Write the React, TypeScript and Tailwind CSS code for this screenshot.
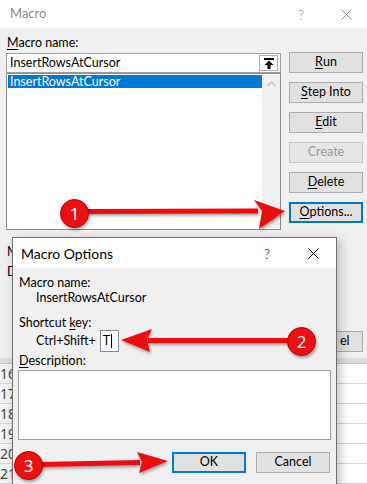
import React from "react";

const Btn = ({ children, focused, disabled }: { children: React.ReactNode; focused?: boolean; disabled?: boolean }) => (
    <div
        className={`h-[21px] w-[74px] flex items-center justify-center text-[12.5px] bg-[#e1e1e1] ${
            focused ? "border-2 border-[#0078d7]" : disabled ? "border border-[#c6c6c6]" : "border border-[#adadad]"
        } ${disabled ? "text-[#9a9a9a] bg-[#e6e6e6]" : "text-black"}`}
    >
        {children}
    </div>
);

const U = ({ children }: { children: React.ReactNode }) => <span className="underline underline-offset-2">{children}</span>;

const Close = ({ color }: { color: string }) => (
    <svg width="11" height="11" viewBox="0 0 11 11">
        <path d="M0.5 0.5 L10.5 10.5 M10.5 0.5 L0.5 10.5" stroke={color} strokeWidth="1" />
    </svg>
);

const rows = [16, 17, 18, 19, 20, 21];

export default function App() {
    return (
        <div className="relative w-[367px] h-[484px] overflow-hidden bg-white font-['Lato','Noto_Sans',sans-serif] text-black">
            {/* Macro dialog */}
            <div className="h-[28px] bg-white flex items-center pl-[10px]">
                <span className="text-[13px] text-[#8a8a8a]">Macro</span>
                <span className="ml-auto text-[14px] text-[#8a8a8a] font-light">?</span>
                <span className="ml-[37px] mr-[15px] flex items-center">
                    <Close color="#8a8a8a" />
                </span>
            </div>
            <div className="h-[330px] bg-[#f0f0f0] flex pl-[6px] pt-[6px]">
                <div className="w-[275px] flex flex-col">
                    <div className="h-[19px] leading-[18px] text-[12.5px] pl-[1px]">
                        <U>M</U>acro name:
                    </div>
                    <div className="h-[20px] bg-white border border-[#a0a0a0] flex items-center pl-[3px] pr-[2px] text-[12.5px]">
                        <span>InsertRowsAtCursor</span>
                        <div className="ml-auto w-[19px] h-[16px] border border-[#adadad] bg-white flex items-center justify-center">
                            <svg width="10" height="11" viewBox="0 0 10 11">
                                <rect x="0" y="0" width="10" height="2" fill="#000" />
                                <path d="M5 2.6 L9.5 7 L6.6 7 L6.6 11 L3.4 11 L3.4 7 L0.5 7 Z" fill="#000" />
                            </svg>
                        </div>
                    </div>
                    <div className="h-[157px] bg-white border border-[#8a8a8a] flex p-[1px] pr-0">
                        <div className="flex-1">
                            <div className="h-[13px] bg-[#0078d7] text-white text-[12.5px] leading-[13px] pl-[2px]">InsertRowsAtCursor</div>
                        </div>
                        <div className="w-[18px] bg-[#f0f0f0] flex flex-col items-center justify-between py-[6px]">
                            <svg width="9" height="6" viewBox="0 0 9 6">
                                <path d="M0.5 5 L4.5 1 L8.5 5" stroke="#c0c0c0" strokeWidth="1.3" fill="none" />
                            </svg>
                            <svg width="9" height="6" viewBox="0 0 9 6">
                                <path d="M0.5 1 L4.5 5 L8.5 1" stroke="#c0c0c0" strokeWidth="1.3" fill="none" />
                            </svg>
                        </div>
                    </div>
                    <div className="mt-[13px] h-[18px] leading-[18px] text-[12.5px] pl-[1px]">M</div>
                    <div className="mt-[2px] h-[18px] leading-[18px] text-[12.5px] pl-[1px]">D</div>
                </div>
                <div className="ml-[8px] pt-[18px] flex flex-col gap-[9px]">
                    <Btn>
                        <U>R</U>un
                    </Btn>
                    <Btn>
                        <U>S</U>tep Into
                    </Btn>
                    <Btn>
                        <U>E</U>dit
                    </Btn>
                    <Btn disabled>Create</Btn>
                    <Btn>
                        <U>D</U>elete
                    </Btn>
                    <Btn focused>
                        <U>O</U>ptions...
                    </Btn>
                    <div className="mt-[99px] flex justify-end">
                        <div className="w-[26px] h-[21px] border border-[#adadad] border-l-0 bg-[#e1e1e1] text-[12.5px] flex items-center pl-[3px]">el</div>
                    </div>
                </div>
            </div>

            {/* worksheet behind */}
            <div className="h-[6px] bg-[#dedede] border-b border-[#c4c4c4]" />
            {rows.map((r) => (
                <div key={r} className="h-[20px] flex border-b border-[#d6d6d6]">
                    <div className="w-[26px] bg-[#f3f3f3] border-r border-[#c8c8c8] text-[14px] leading-[20px] text-[#444] font-['Noto_Sans',sans-serif]">
                        {r}
                    </div>
                    <div className="flex-1 bg-white" />
                </div>
            ))}

            {/* Macro Options dialog */}
            <div className="absolute left-[12px] top-[237px] w-[325px] h-[260px] border border-[#6f6f6f] bg-[#f0f0f0] shadow-[3px_3px_10px_rgba(0,0,0,0.25)]">
                <div className="h-[30px] bg-white flex items-center pl-[8px]">
                    <span className="text-[14px]">Macro Options</span>
                    <span className="ml-auto text-[14px] font-light">?</span>
                    <span className="ml-[38px] mr-[17px] flex items-center">
                        <Close color="#000" />
                    </span>
                </div>
                <div className="flex flex-col pt-[7px] text-[12.5px]">
                    <div className="pl-[6px] leading-[15px]">Macro name:</div>
                    <div className="pl-[23px] leading-[15px]">InsertRowsAtCursor</div>
                    <div className="pl-[6px] leading-[15px] mt-[10px]">
                        Shortcut <U>k</U>ey:
                    </div>
                    <div className="pl-[23px] h-[22px] flex items-center">
                        <span>Ctrl+Shift+</span>
                        <div className="ml-[4px] w-[19px] h-[22px] bg-white border border-[#8a8a8a] flex items-center pl-[2px]">
                            <span>T</span>
                            <span className="w-px h-[14px] bg-black ml-[1px]" />
                        </div>
                    </div>
                    <div className="pl-[6px] leading-[15px] mt-[1px]">
                        <U>D</U>escription:
                    </div>
                    <div className="ml-[5px] mt-[2px] w-[313px] h-[70px] bg-white border border-[#a0a0a0]" />
                    <div className="mt-[12px] flex justify-end gap-[10px] pr-[6px]">
                        <Btn focused>OK</Btn>
                        <Btn>Cancel</Btn>
                    </div>
                </div>
            </div>

            {/* annotations */}
            <svg className="absolute left-0 top-0 pointer-events-none" width="367" height="484" viewBox="0 0 367 484">
                <defs>
                    <filter id="sh" x="-10%" y="-50%" width="120%" height="200%">
                        <feDropShadow dx="1" dy="2" stdDeviation="1.5" floodColor="#000" floodOpacity="0.35" />
                    </filter>
                </defs>
                <g fill="#ec0c0c" filter="url(#sh)">
                    <path d="M86 209 L258 208.5 L258 213.5 L86 214 Z" />
                    <path d="M254 200 L285 211 L259 229 L262 211 Z" />
                    <path d="M290 338 L148 338 L148 343 L290 343 Z" />
                    <path d="M152 329 L121 340 L150 352 L147 340 Z" />
                    <path d="M40 462 L140 460 L140 465 L40 467 Z" />
                    <path d="M137 452 L168 461 L139 473 L142 462 Z" />
                </g>
            </svg>
            {[
                { n: "1", x: 60, y: 199 },
                { n: "2", x: 287, y: 327 },
                { n: "3", x: 14, y: 451 },
            ].map((c) => (
                <div
                    key={c.n}
                    style={{ left: c.x, top: c.y }}
                    className="absolute w-[29px] h-[29px] rounded-full bg-[#ee1010] border border-[#b80000] flex items-center justify-center text-white text-[17px] font-['Noto_Sans',sans-serif] shadow-[1px_2px_3px_rgba(0,0,0,0.35)]"
                >
                    {c.n}
                </div>
            ))}
        </div>
    );
}
